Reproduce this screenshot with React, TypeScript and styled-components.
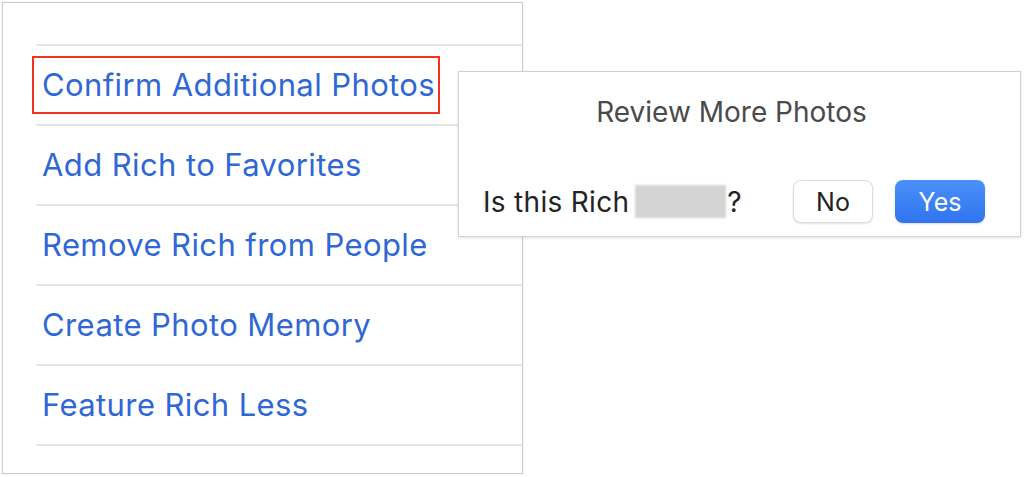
import styled, { createGlobalStyle } from 'styled-components';

const GlobalStyle = createGlobalStyle`
  body {
    margin: 0;
    background: #ffffff;
    font-family: Inter, "Liberation Sans", sans-serif;
  }
`;

const actions = [
  'Confirm Additional Photos',
  'Add Rich to Favorites',
  'Remove Rich from People',
  'Create Photo Memory',
  'Feature Rich Less',
];

const App = () => {
  return (
    <Page>
      <GlobalStyle />
      <MenuPanel>
        <ActionList>
          {actions.map((label, i) => (
            <ActionRow key={label}>
              {i === 0 ? <Highlight>{label}</Highlight> : <ActionLabel>{label}</ActionLabel>}
            </ActionRow>
          ))}
        </ActionList>
      </MenuPanel>
      <Dialog>
        <DialogTitle>Review More Photos</DialogTitle>
        <DialogFooter>
          <Question>
            Is this Rich
            <Redacted />?
          </Question>
          <Buttons>
            <Button>No</Button>
            <Button $primary>Yes</Button>
          </Buttons>
        </DialogFooter>
      </Dialog>
    </Page>
  );
};

export default App;

const Page = styled.div`
  position: relative;
  width: 1024px;
  height: 477px;
  padding: 2px 0 0 2px;
  box-sizing: border-box;
`;

const MenuPanel = styled.div`
  width: 521px;
  height: 472px;
  box-sizing: border-box;
  border: 1px solid #cbcbcb;
  box-shadow: 0 0 1px rgba(0, 0, 0, 0.15);
  padding: 41px 0 0 33px;
`;

const ActionList = styled.div`
  display: flex;
  flex-direction: column;
  border-bottom: 2px solid #e6e6e6;
`;

const ActionRow = styled.div`
  height: 80px;
  box-sizing: border-box;
  border-top: 2px solid #e6e6e6;
  display: flex;
  align-items: center;
  padding-left: 6px;
`;

const ActionLabel = styled.span`
  font-size: 31px;
  line-height: 38px;
  color: #2f68d4;
  letter-spacing: 0.4px;
`;

const Highlight = styled(ActionLabel)`
  border: 2px solid #f1321e;
  margin-left: -10px;
  padding: 8px 3px 8px 8px;
`;

const Dialog = styled.div`
  position: absolute;
  left: 458px;
  top: 71px;
  width: 563px;
  height: 166px;
  box-sizing: border-box;
  background: #ffffff;
  border: 1px solid #d2d2d2;
  box-shadow: 0 1px 3px rgba(0, 0, 0, 0.12);
  display: flex;
  flex-direction: column;
  padding: 23px 35px 13px 24px;
`;

const DialogTitle = styled.div`
  text-align: center;
  font-size: 28px;
  color: #4a4a4a;
  padding-right: 5px;
`;

const DialogFooter = styled.div`
  margin-top: auto;
  display: flex;
  align-items: center;
  justify-content: space-between;
`;

const Question = styled.div`
  display: flex;
  align-items: center;
  font-size: 28px;
  letter-spacing: 0.3px;
  color: #242424;
`;

const Redacted = styled.span`
  display: inline-block;
  width: 91px;
  height: 33px;
  margin: 0 1px 0 6px;
  background: #d4d4d4;
  filter: blur(1px);
`;

const Buttons = styled.div`
  display: flex;
  gap: 22px;
`;

const Button = styled.button<{ $primary?: boolean }>`
  height: 43px;
  min-width: ${({ $primary }) => ($primary ? '90px' : '80px')};
  border-radius: 8px;
  font-family: Inter, "Liberation Sans", sans-serif;
  font-size: 25px;
  padding: 0 12px;
  color: ${({ $primary }) => ($primary ? '#ffffff' : '#222222')};
  background: ${({ $primary }) =>
    $primary ? 'linear-gradient(#4b90f9, #2f74ef)' : '#ffffff'};
  border: ${({ $primary }) => ($primary ? 'none' : '1px solid #dcdcdc')};
  box-shadow: ${({ $primary }) =>
    $primary ? '0 1px 2px rgba(0, 0, 0, 0.15)' : '0 1px 2px rgba(0, 0, 0, 0.12)'};
`;
